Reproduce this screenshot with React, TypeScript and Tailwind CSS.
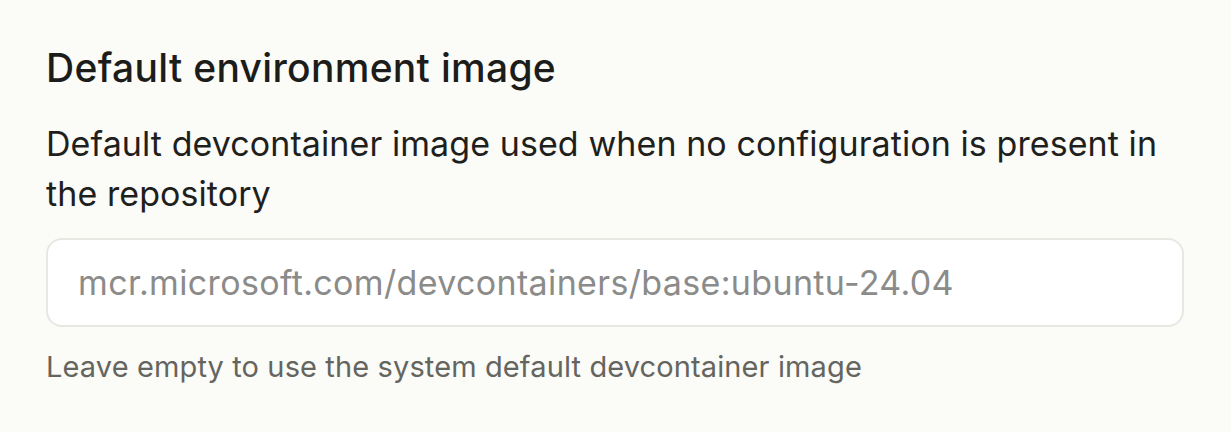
export default function App() {
  return (
    <div
      className="min-h-[432px] w-full bg-[#fbfbf7] pl-[46px] pr-[48px] pt-[44px]"
      style={{ fontFamily: "Inter, 'Noto Sans', sans-serif" }}
    >
      <h2 className="text-[39px] font-medium leading-[48px] tracking-[0.3px] text-[#1c1c1a]">
        Default environment image
      </h2>
      <p className="mt-[27px] text-[34px] leading-[50px] tracking-[0.08px] text-[#1f1f1d]">
        Default devcontainer image used when no configuration is present in the repository
      </p>
      <input
        type="text"
        placeholder="mcr.microsoft.com/devcontainers/base:ubuntu-24.04"
        className="mt-[19px] block h-[89px] w-[1138px] rounded-[16px] border-2 border-[#e8e7e1] bg-white px-[30px] text-[34px] tracking-[0.35px] text-[#1f1f1d] placeholder:text-[#8b8b89] outline-none"
      />
      <p className="mt-[20px] text-[29px] leading-[40px] tracking-[0.12px] text-[#65655f]">
        Leave empty to use the system default devcontainer image
      </p>
    </div>
  );
}
